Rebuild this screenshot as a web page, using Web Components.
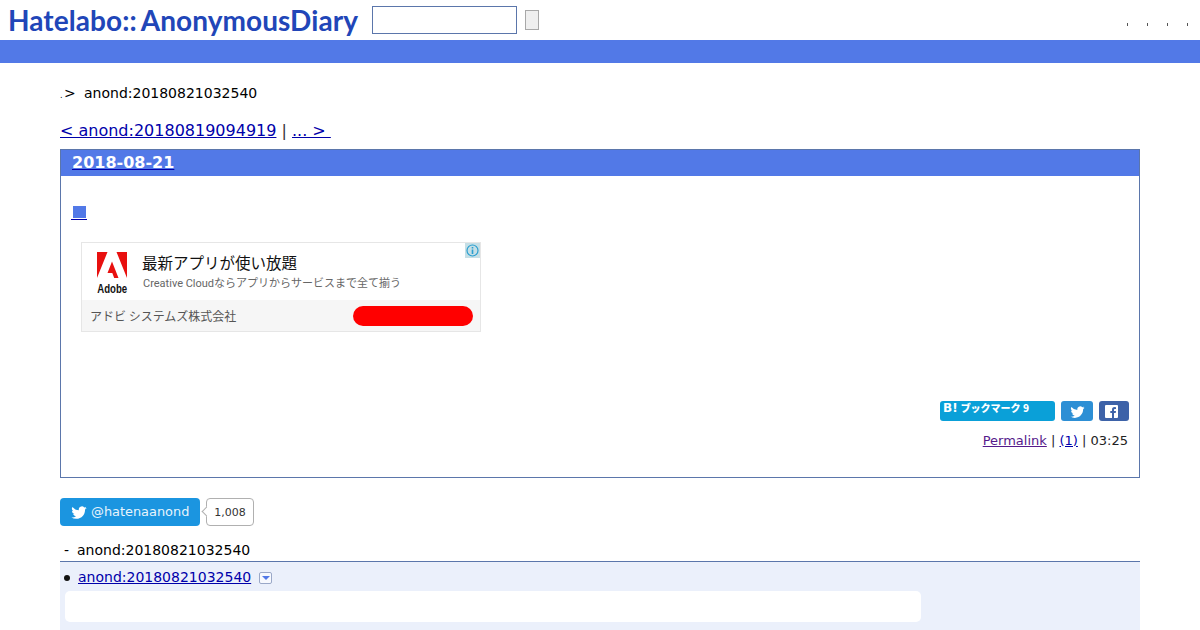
<!DOCTYPE html>
<html lang="ja"><head><meta charset="utf-8"><title>anond</title>
<style>
html,body{margin:0;background:#fff}
body{font-family:"DejaVu Sans",sans-serif;font-size:14px;color:#000;width:1200px;height:630px;overflow:hidden}
a{color:#00a}
</style></head><body>
<diary-header></diary-header>
<diary-main>
  <diary-crumb></diary-crumb>
  <diary-pager></diary-pager>
  <diary-day date="2018-08-21">
    <ad-card></ad-card>
    <share-row></share-row>
    <entry-foot></entry-foot>
  </diary-day>
  <twitter-follow></twitter-follow>
  <refer-list></refer-list>
</diary-main>
<script>
function def(name,html){
  customElements.define(name,class extends HTMLElement{
    constructor(){super();this.attachShadow({mode:'open'}).innerHTML=html.replace(/\{\{(\w+)\}\}/g,(m,k)=>this.getAttribute(k)||'')}
  });
}
const BIRD='<path fill="#fff" d="M24 4.6a9.8 9.8 0 0 1-2.8.8 4.9 4.9 0 0 0 2.1-2.7 9.8 9.8 0 0 1-3.1 1.2 4.9 4.9 0 0 0-8.4 4.5A14 14 0 0 1 1.7 3.200a4.9 4.9 0 0 0 1.500 6.600 4.900 4.900 0 0 1-2.200-.6v.1a4.900 4.900 0 0 0 3.900 4.800 4.900 4.900 0 0 1-2.200.1 4.900 4.900 0 0 0 4.600 3.400A9.900 9.900 0 0 1 0 19.600 14 14 0 0 0 7.500 21.800c9.100 0 14-7.500 14-14v-.6A10 10 0 0 0 24 4.600z"/>';
def('diary-header',`<style>
:host{display:block}
.top{height:40px;display:flex;align-items:center;padding-left:8px}
.logo{font:700 28px/40px Lato,sans-serif;color:#2146b8;letter-spacing:.07px;width:364px;white-space:nowrap}
.logo span{margin-left:4px}
.q{box-sizing:border-box;width:145px;height:28px;border:1px solid #5b76ab;background:#fff;margin:0}
.btn{box-sizing:border-box;width:14px;height:20px;border:1px solid #a8a8a8;background:#efefef;margin:0 0 0 8px;padding:0}
.dots{margin-left:auto;display:flex;gap:19px;padding:8px 12px 0 0}
.dots i{width:1px;height:3px;background:#555}
.bar{height:23px;background:#5279e7}
</style><div class="top"><div class="logo">Hatelabo::<span>AnonymousDiary</span></div><input class="q" aria-label="search"><button class="btn" aria-label="go"></button><div class="dots"><i></i><i></i><i></i><i></i></div></div><div class="bar"></div>`);
def('diary-main',`<style>:host{display:block;padding:0 60px}</style><slot></slot>`);
def('diary-crumb',`<style>
:host{display:flex;align-items:center;height:20px;margin-top:20px;font-size:14px;white-space:pre}
.d{width:4px;font-size:8px;align-self:flex-end;line-height:14px}
.g{width:20px;line-height:18px}
</style><span class="d">.</span><span class="g">&gt;</span><span>anond:20180821032540</span>`);
def('diary-pager',`<style>
:host{display:block;margin-top:18px;height:19px;line-height:19px;font-size:16px;white-space:pre;color:#333}
a{color:#00a}
</style><a href="#p">&lt; anond:20180819094919</a> | <a href="#n">... &gt; </a>`);
def('diary-day',`<style>
:host{display:block;box-sizing:border-box;height:329px;margin-top:9px;border:1px solid #5b76ab}
h2{margin:0;height:26px;background:#5279e7;padding-left:11px;font:700 16px/25px "DejaVu Sans",sans-serif}
h2 a{color:#00a}
h2 span{color:#fff}
.sq{display:block;margin:28px 0 0 10px;height:16px;line-height:16px;width:16px}
.sq a{display:block;color:#00a;height:15px;border-bottom:1px solid #00a;position:relative}
.sq i{position:absolute;left:2px;top:2px;width:13px;height:12px;background:#5279e7}
</style><h2><a href="#d"><span>{{date}}</span></a></h2><div class="sq"><a href="#s" aria-label="section"><i></i></a></div><slot></slot>`);
def('ad-card',`<style>
:host{display:block;box-sizing:border-box;width:400px;height:90px;margin:22px 0 0 20px;border:1px solid #e6e6e6;position:relative;font-family:"Noto Sans CJK JP","Liberation Sans",sans-serif;background:#fff}
.up{height:57px;display:flex}
.logo{width:60px;display:flex;flex-direction:column;align-items:center;padding-top:9px}
.logo svg{display:block}
.logo b{font:700 13px/12px "Liberation Sans",sans-serif;color:#111;margin-top:5px;transform:scale(.74,1.05);letter-spacing:0}
.t{padding-top:9px}
.h{font-size:15.500px;line-height:21px;color:#111;white-space:nowrap}
.s{font:11px/15px Roboto,"Noto Sans CJK JP",sans-serif;color:#666;white-space:nowrap;margin:3px 0 0 1px}
.low{height:31px;background:#f6f6f6;display:flex;align-items:center;justify-content:space-between;padding:0 7px 0 8px}
.n{font-size:12px;color:#555;white-space:nowrap}
.cta{width:120px;height:20px;border-radius:10px;background:#f00}
.info{position:absolute;right:0;top:0;width:15px;height:15px;background:#c5dfe6;display:flex;align-items:center;justify-content:center}
</style><div class="up"><div class="logo"><svg width="30" height="26" viewBox="0 0 30 26"><path fill="#e8100f" d="M0 0h10.500L0 26zM19.500 0H30v26zM15 9.500l6.500 16.500h-4.300l-1.900-5H10.500z"/></svg><b>Adobe</b></div><div class="t"><div class="h">最新アプリが使い放題</div><div class="s">Creative Cloudならアプリからサービスまで全て揃う</div></div></div><div class="low"><span class="n">アドビ システムズ株式会社</span><span class="cta"></span></div><div class="info"><svg width="13" height="13" viewBox="0 0 13 13"><circle cx="6.500" cy="6.500" r="5.500" fill="none" stroke="#2a9fd0" stroke-width="1.200"/><path stroke="#2a9fd0" stroke-width="1.600" d="M6.500 3v1.500M6.500 5.500V10"/></svg></div>`);
def('share-row',`<style>
:host{display:flex;justify-content:flex-end;gap:6px;margin:69px 10px 0 0;height:20px}
.b{height:20px;border-radius:3px;display:flex;align-items:center;justify-content:center}
.h{width:115px;background:#0aa0d8;color:#fff;font:900 10px/14px "Noto Sans CJK JP","DejaVu Sans",sans-serif;justify-content:flex-start;padding-left:3px;box-sizing:border-box;align-items:flex-start;white-space:pre}
.h b{font:700 12px/14px "DejaVu Sans",sans-serif;margin-right:3px}
.t{width:32px;background:#2d8fd5}
.f{width:30px;background:#3d62a8;box-sizing:border-box;padding-right:6px}
</style><span class="b h"><b>B!</b>ブックマーク 9</span><span class="b t"><svg width="15" height="13" viewBox="0 0 24 22">${BIRD}</svg></span><span class="b f"><svg width="13" height="13" viewBox="0 0 13 13"><path fill="#fff" fill-rule="evenodd" d="M1 0h11a1 1 0 0 1 1 1v11a1 1 0 0 1-1 1H9V8h1.700l.3-2H9V5c0-.6.300-1 1-1h1V2.200L9.500 2C7.800 2 7 3 7 4.700V6H5.300v2H7v5H1a1 1 0 0 1-1-1V1a1 1 0 0 1 1-1z"/></svg></span>`);
def('entry-foot',`<style>
:host{display:block;text-align:right;margin-top:10px;padding-right:11px;font-size:13px;line-height:20px;color:#222;white-space:pre}
.v{color:#551a8b}a{color:#00a}
</style><a class="v" href="#l">Permalink</a> | <a href="#c">(1)</a> | 03:25`);
def('twitter-follow',`<style>
:host{display:flex;align-items:center;margin-top:20px;height:28px}
.b{box-sizing:border-box;width:140px;height:28px;border-radius:4px;background:#1b95e0;display:flex;align-items:center;padding-left:11px;gap:4px;color:#e8f4fc;font-size:12.900px;white-space:nowrap}
.b span{padding-bottom:2px}
.c{position:relative;box-sizing:border-box;margin-left:6px;width:48px;height:28px;border:1px solid #b0b0b0;border-radius:4px;background:#fff;color:#333;font-size:11px;display:flex;align-items:center;justify-content:center}
.c::before{content:"";position:absolute;left:-4px;top:9px;width:6px;height:6px;background:#fff;border-left:1px solid #b0b0b0;border-bottom:1px solid #b0b0b0;transform:rotate(45deg)}
</style><div class="b"><svg width="16" height="14" viewBox="0 0 24 22">${BIRD}</svg><span>@hatenaanond</span></div><div class="c">1,008</div>`);
def('refer-list',`<style>
:host{display:block;margin-top:15px;font-size:14px}
.head{height:20px;line-height:19px;border-bottom:1px solid #5b76ab;display:flex;white-space:pre;padding-left:4px}
.head i{font-style:normal;width:13px}
.body{background:#ebf0fb;height:68px;padding:0 0 0 3px}
.row{display:flex;align-items:center;height:29px;box-sizing:border-box}
.dot{width:6px;height:6px;border-radius:50%;background:#111;margin:2px 8px 0 1px}
a{color:#00a}
.v{box-sizing:border-box;width:13px;height:12px;border:1px solid #9aa8c8;border-radius:2px;margin:2px 0 0 8px;background:#f7f9fe;display:flex;align-items:center;justify-content:center}
.v::before{content:"";border:4px solid transparent;border-top:4px solid #5279e7;border-bottom:0}
.box{width:856px;height:31px;background:#fff;border-radius:5px;margin-left:2px}
</style><div class="head"><i>-</i><span>anond:20180821032540</span></div><div class="body"><div class="row"><span class="dot"></span><a href="#r">anond:20180821032540</a><span class="v"></span></div><div class="box"></div></div>`);
</script></body></html>
